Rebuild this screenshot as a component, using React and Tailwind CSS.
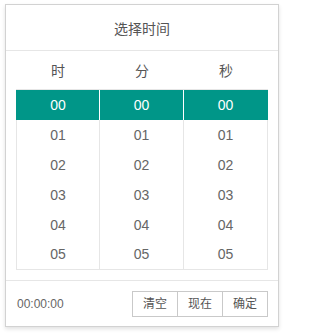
import React from 'react';

const cols = ['时', '分', '秒'];
const rows = ['00', '01', '02', '03', '04', '05'];

export default function App() {
  return (
    <div className="w-[287px] h-[335px] bg-white pt-[4px] pl-[5px] font-['Liberation_Sans','Noto_Sans_CJK_SC',sans-serif]">
      <div className="w-[274px] h-[323px] border border-[#d2d2d2] bg-white shadow-[0_2px_4px_rgba(0,0,0,0.12)] flex flex-col">
        {/* header */}
        <div className="h-[46px] pt-[4px] border-b border-[#e6e6e6] flex items-center justify-center text-[14px] text-[#555]">
          选择时间
        </div>

        {/* time lists */}
        <div className="px-[10px]">
          <div className="h-[38px] grid grid-cols-3 pt-[2px] items-center text-center text-[14px] text-[#555]">
            {cols.map((c) => (
              <span key={c}>{c}</span>
            ))}
          </div>
          <div className="border-t border-[#e6e6e6]">
            {rows.map((r, i) => {
              const sel = i === 0;
              const last = i === rows.length - 1;
              return (
                <div key={r} className="grid grid-cols-3 h-[30px] text-[14px]">
                  {cols.map((c, j) => {
                    let cls = 'flex items-center justify-center border-r ';
                    if (j === 0) cls += 'border-l ';
                    if (last) cls += 'border-b ';
                    if (sel) {
                      cls += 'bg-[#009688] text-white ';
                      cls += j === 2 ? 'border-r-[#009688] ' : 'border-r-white ';
                      if (j === 0) cls += 'border-l-[#009688] ';
                    } else {
                      cls += 'border-[#e6e6e6] text-[#666] ';
                    }
                    return (
                      <div key={c} className={cls}>
                        {r}
                      </div>
                    );
                  })}
                </div>
              );
            })}
          </div>
        </div>

        {/* footer */}
        <div className="mt-[10px] flex-1 border-t border-[#e6e6e6] px-[10px] flex items-center justify-between">
          <span className="text-[12px] text-[#666] pl-px">00:00:00</span>
          <div className="flex">
            {['清空', '现在', '确定'].map((b, i) => (
              <span
                key={b}
                className={
                  'h-[26px] px-[10px] border border-[#c9c9c9] flex items-center text-[12px] text-[#555] bg-white ' +
                  (i > 0 ? '-ml-px' : '')
                }
              >
                {b}
              </span>
            ))}
          </div>
        </div>
      </div>
    </div>
  );
}
